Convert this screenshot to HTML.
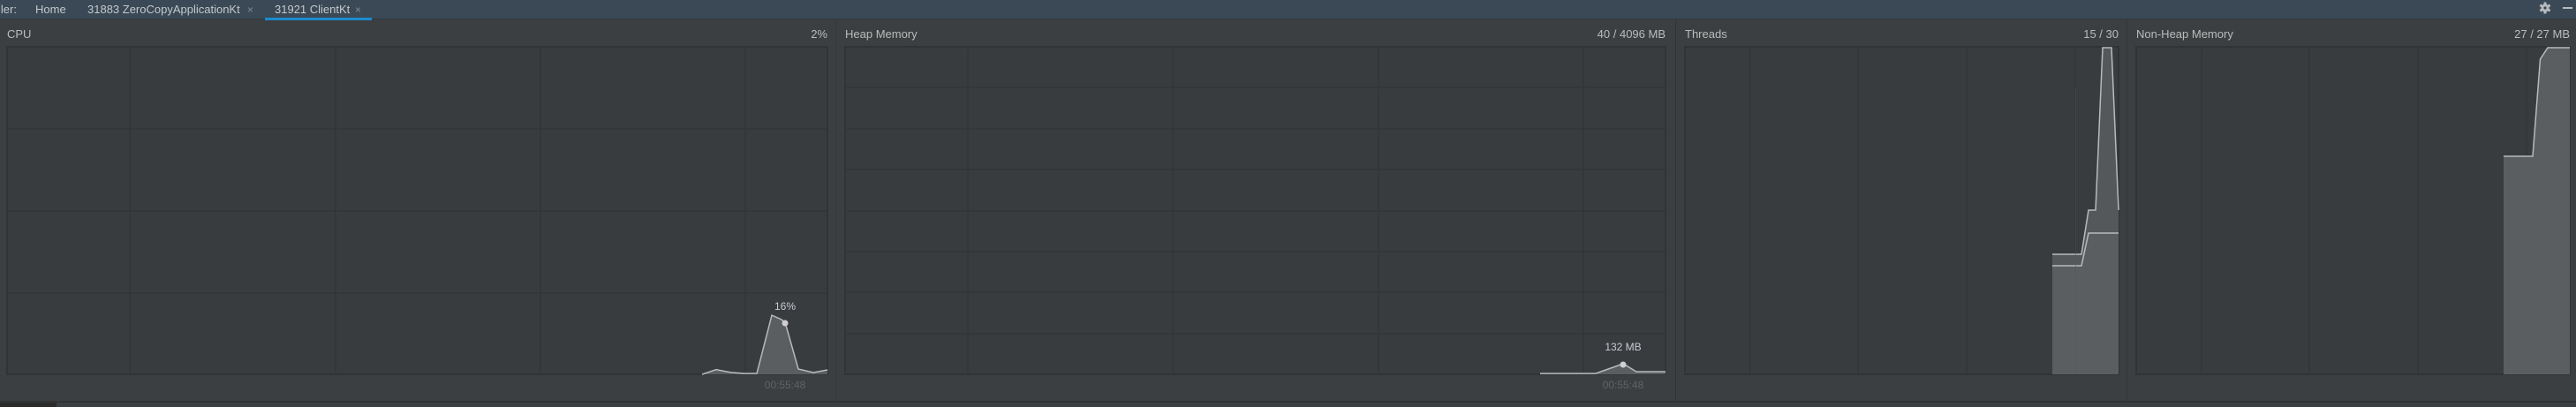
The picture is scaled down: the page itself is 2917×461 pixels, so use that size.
<!DOCTYPE html>
<html><head><meta charset="utf-8"><style>
html,body{margin:0;padding:0;width:2917px;height:461px;overflow:hidden;background:#3c3f41}
svg{display:block}
text{font-family:"Liberation Sans",sans-serif}
</style></head><body>
<svg width="2917" height="461" viewBox="0 0 2917 461" xmlns="http://www.w3.org/2000/svg">
<rect x="0" y="0" width="2917" height="461" fill="#3c3f41"/>
<!-- header -->
<rect x="0" y="0" width="2917" height="22" fill="#3a4955"/>
<rect x="0" y="21" width="2917" height="1" fill="#2f3a42"/>
<text x="-2" y="15" font-size="13" fill="#c4c8cc">iler:</text>
<text x="40" y="15" font-size="13" fill="#c4c8cc">Home</text>
<text x="99" y="15" font-size="13" fill="#c4c8cc">31883 ZeroCopyApplicationKt</text>
<text x="280" y="15" font-size="12" fill="#7d8890">×</text>
<text x="311" y="15" font-size="13" fill="#c4c8cc">31921 ClientKt</text>
<text x="402" y="15" font-size="12" fill="#7d8890">×</text>
<rect x="300" y="20" width="121" height="3" fill="#1a8bd1"/>
<!-- gear -->
<g transform="translate(2882,9)" fill="#b8bcc0">
<circle r="4.5"/>
<rect x="-1.5" y="-6.5" width="3" height="13"/>
<rect x="-1.5" y="-6.5" width="3" height="13" transform="rotate(60)"/>
<rect x="-1.5" y="-6.5" width="3" height="13" transform="rotate(120)"/>
<circle r="1.6" fill="#3a4955"/>
</g>
<rect x="2902" y="8" width="11" height="2" fill="#b8bcc0"/>
<!-- separators -->
<rect x="946" y="22" width="1" height="433" fill="#35383a"/>
<rect x="1897" y="22" width="1" height="433" fill="#323436"/>
<rect x="2408" y="22" width="1" height="433" fill="#35383a"/>
<!-- titles -->
<g font-size="13" fill="#bbbbbb">
<text x="8" y="43">CPU</text>
<text x="937" y="43" text-anchor="end">2%</text>
<text x="957" y="43">Heap Memory</text>
<text x="1886" y="43" text-anchor="end">40 / 4096 MB</text>
<text x="1908" y="43">Threads</text>
<text x="2399" y="43" text-anchor="end">15 / 30</text>
<text x="2419" y="43">Non-Heap Memory</text>
<text x="2910" y="43" text-anchor="end">27 / 27 MB</text>
</g>
<!-- chart boxes -->
<g fill="#393c3f" stroke="#313335" stroke-width="2">
<rect x="8" y="53" width="929" height="371"/>
<rect x="957" y="53" width="929" height="371"/>
<rect x="1908" y="53" width="491" height="371"/>
<rect x="2419" y="53" width="491" height="371"/>
</g>
<g stroke="#333537" stroke-width="1.5">
<path d="M147 53V424M380 53V424M612 53V424M844 53V424M8 146H937M8 239H937M8 332H937"/>
<path d="M1096 53V424M1328 53V424M1561 53V424M1793 53V424M957 99H1886M957 146H1886M957 192H1886M957 239H1886M957 285H1886M957 331H1886M957 378H1886"/>
<path d="M1982 53V424M2104 53V424M2227 53V424M2350 53V424"/>
<path d="M2493 53V424M2615 53V424M2738 53V424M2861 53V424"/>
</g>
<!-- CPU data -->
<path d="M795 424L811 418.7L827 421.7L842 423L857 423L874 357L885 362L889 365L904 418L921 422L937 419V424H795Z" fill="#5b5e60"/>
<path d="M795 424L811 418.7L827 421.7L842 423L857 423L874 357L885 362L889 365L904 418L921 422L937 419" fill="none" stroke="#b9b9b9" stroke-width="1.5"/>
<circle cx="889" cy="366" r="3.5" fill="#cfcfcf"/>
<text x="889" y="351" font-size="12" fill="#c8ccd0" text-anchor="middle">16%</text>
<text x="889" y="440" font-size="12" fill="#5f6366" text-anchor="middle">00:55:48</text>
<!-- Heap data -->
<path d="M1744 423L1807 423L1838 412L1853 421L1886 421V424H1744Z" fill="#5b5e60"/>
<path d="M1744 423L1807 423L1838 412L1853 421L1886 421" fill="none" stroke="#b9b9b9" stroke-width="1.5"/>
<circle cx="1838" cy="413" r="3.5" fill="#cfcfcf"/>
<text x="1838" y="397" font-size="12" fill="#c8ccd0" text-anchor="middle">132 MB</text>
<text x="1838" y="440" font-size="12" fill="#5f6366" text-anchor="middle">00:55:48</text>
<!-- Threads data -->
<path d="M2324 288L2357 288L2365 238L2373 238L2381 54L2391 54L2399 238V424H2324Z" fill="#55585a"/>
<path d="M2324 301L2357 301L2365 264L2399 264V424H2324Z" fill="#5b5e60"/>
<path d="M2324 288L2357 288L2365 238L2373 238L2381 54L2391 54L2399 238" fill="none" stroke="#b9b9b9" stroke-width="1.5"/>
<path d="M2324 301L2357 301L2365 264L2399 264" fill="none" stroke="#b9b9b9" stroke-width="1.5"/>
<rect x="2350" y="100" width="1" height="324" fill="#55585a" opacity="0.5"/>
<!-- Non-heap data -->
<path d="M2835 177L2868 177L2876.5 67L2885 54L2910 54V424H2835Z" fill="#5b5e60"/>
<path d="M2835 177L2868 177L2876.5 67L2885 54L2910 54" fill="none" stroke="#b9b9b9" stroke-width="1.5"/>
<!-- bottom -->
<rect x="0" y="454" width="2917" height="2" fill="#313335"/>
<rect x="0" y="456" width="2917" height="5" fill="#3c3f41"/>
<rect x="0" y="456" width="64" height="5" fill="#2b2b2b"/>
</svg>
</body></html>
